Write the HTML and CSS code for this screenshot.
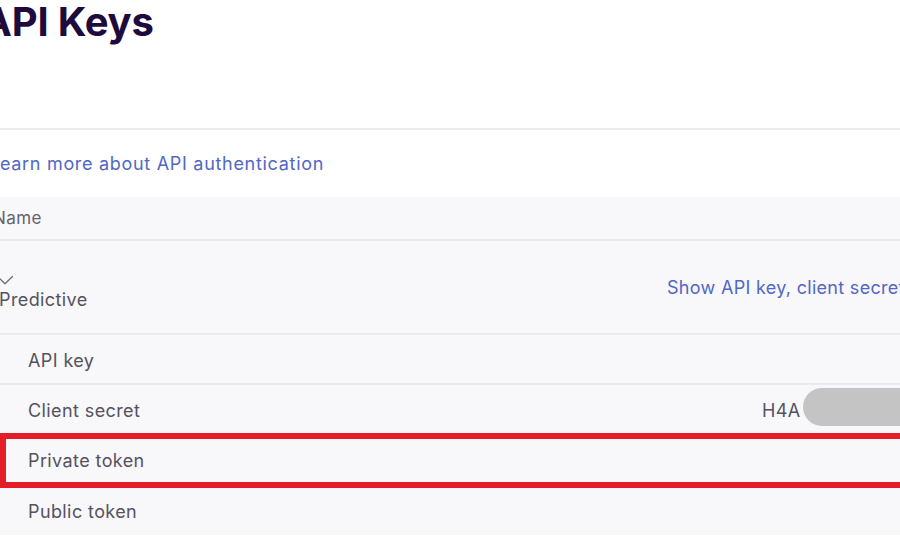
FILE: index.html
```html
<!DOCTYPE html>
<html lang="en">
<head>
<meta charset="utf-8">
<title>API Keys</title>
<link rel="stylesheet" href="styles.css">
</head>
<body>
<main class="page">
  <h1 class="title">API Keys</h1>
  <hr class="divider">
  <div class="learn"><a class="link" href="#">Learn more about API authentication</a></div>
  <div class="table">
    <div class="row head"><div class="cell name-head">Name</div></div>
    <div class="row app">
      <div class="cell app-name">
        <svg class="chev" width="16" height="10" viewBox="0 0 16 10" aria-hidden="true"><path d="M0.5 1.5 L8 8.8 L15.5 1.5" fill="none" stroke="#6f6c78" stroke-width="1.3" stroke-linecap="round" stroke-linejoin="round"/></svg>
        <span>Predictive</span>
      </div>
      <div class="cell"><a class="link" href="#">Show API key, client secret and tokens</a></div>
    </div>
    <div class="row sub"><div class="cell key">API key</div><div class="cell"></div></div>
    <div class="row sub"><div class="cell key">Client secret</div><div class="cell value">H4A<span class="redact"></span></div></div>
    <div class="row sub marked"><div class="cell key">Private token</div><div class="cell"></div></div>
    <div class="row sub last"><div class="cell key">Public token</div><div class="cell"></div></div>
  </div>
</main>
</body>
</html>
```
FILE: styles.css
```css
html, body {
  margin: 0;
  padding: 0;
  background: #ffffff;
  overflow: hidden;
  width: 900px;
  height: 550px;
}
.page {
  margin-left: -18px;
  width: 1100px;
  font-family: Inter, "Noto Sans", sans-serif;
  color: #5a5764;
}
.title {
  margin: 0;
  font-size: 40px;
  line-height: 44px;
  font-weight: 700;
  color: #1e0a3c;
  letter-spacing: -0.2px;
}
.divider {
  margin: 84px 0 0 0;
  border: 0;
  height: 2px;
  background: #ecebf0;
}
.learn {
  height: 67px;
  display: flex;
  align-items: center;
  padding-left: 7px;
  font-size: 18px;
  letter-spacing: 0.7px;
}
.link {
  color: #5067c6;
  text-decoration: none;
}
.table {
  background: #f8f7fa;
}
.row {
  display: grid;
  grid-template-columns: 685px 1fr;
  align-items: center;
  border-bottom: 2px solid #ebeaef;
  position: relative;
  letter-spacing: 0.4px;
}
.row.head {
  height: 42px;
}
.name-head {
  padding-left: 11px;
  font-size: 17px;
  color: #65626e;
}
.row.app {
  height: 92px;
  font-size: 18px;
}
.app-name {
  display: flex;
  flex-direction: column;
  align-items: flex-start;
  padding-left: 15px;
  padding-top: 10px;
}
.app-name span {
  margin-left: 2px;
  margin-top: 4px;
  color: #55525e;
}
.chev {
  display: block;
}
.row.app .link {
  font-size: 18px;
  white-space: nowrap;
  letter-spacing: 0.3px;
}
.row.sub {
  height: 48px;
  font-size: 18px;
}
.row.last {
  border-bottom: 0;
  height: 50px;
}
.key {
  padding-left: 46px;
  padding-top: 2px;
  color: #55525e;
}
.value {
  padding-left: 95px;
  padding-top: 2px;
  display: flex;
  align-items: center;
  color: #55525e;
}
.redact {
  display: inline-block;
  width: 220px;
  height: 38px;
  margin-left: 2px;
  margin-top: -6px;
  border-radius: 19px 0 0 19px;
  background: #c4c4c4;
}
.marked::after {
  content: "";
  position: absolute;
  left: 18px;
  right: -40px;
  top: -2px;
  bottom: -5px;
  border: 6px solid #e41e27;
  pointer-events: none;
}
```
